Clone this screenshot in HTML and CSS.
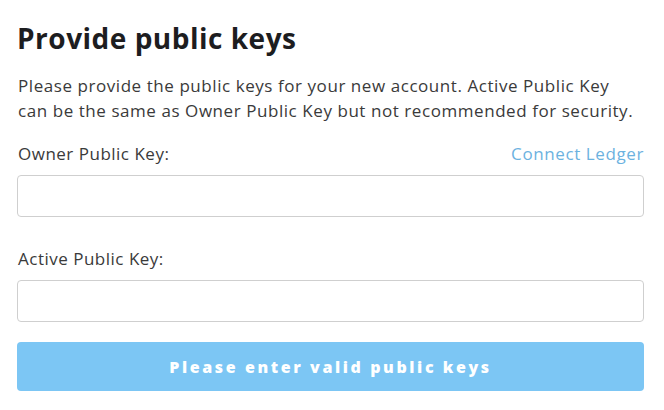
FILE: index.html
```html
<!DOCTYPE html>
<html>
<head>
<meta charset="utf-8">
<link rel="stylesheet" href="styles.css">
</head>
<body>
<div class="page">
  <h1 class="title">Provide public keys</h1>
  <p class="intro">Please provide the public keys for your new account. Active Public Key<br>can be the same as Owner Public Key but not recommended for security.</p>
  <div class="field">
    <div class="label-row">
      <span class="label">Owner Public Key:</span>
      <a class="link">Connect Ledger</a>
    </div>
    <input class="input" type="text">
  </div>
  <div class="field">
    <div class="label-row">
      <span class="label">Active Public Key:</span>
    </div>
    <input class="input" type="text">
  </div>
  <button class="submit" disabled>Please enter valid public keys</button>
</div>
</body>
</html>
```
FILE: styles.css
```css
html, body {
  margin: 0;
  padding: 0;
  background: #fff;
}
.page {
  width: 627px;
  padding: 0 17px;
  font-family: "Open Sans", sans-serif;
  color: #333;
}
.title {
  margin: 0;
  padding-top: 19px;
  font-size: 28px;
  line-height: 38px;
  font-weight: 700;
  letter-spacing: 0.5px;
  color: #1d1d1f;
}
.intro {
  margin: 16px -20px 0 1px;
  font-size: 17px;
  line-height: 25px;
  letter-spacing: 0.56px;
  white-space: nowrap;
  color: #3a3a3a;
}
.field {
  margin-top: 20px;
}
.field + .field {
  margin-top: 31px;
}
.label-row {
  display: flex;
  justify-content: space-between;
  align-items: baseline;
  padding-left: 1px;
  font-size: 17px;
  line-height: 22px;
  letter-spacing: 0.5px;
}
.label {
  color: #3a3a3a;
}
.link {
  color: #6cb2df;
  cursor: pointer;
  letter-spacing: 0.6px;
}
.input {
  display: block;
  box-sizing: border-box;
  width: 100%;
  height: 42px;
  margin: 10px 0 0;
  border: 1px solid #cfcfcf;
  border-radius: 4px;
  background: #fff;
}
.submit {
  display: block;
  width: 100%;
  height: 49px;
  margin-top: 20px;
  padding: 0;
  border: none;
  border-radius: 4px;
  background: #7cc6f4;
  color: #fff;
  font-family: "Open Sans", sans-serif;
  font-size: 16px;
  font-weight: 800;
  letter-spacing: 2.6px;
}
```
